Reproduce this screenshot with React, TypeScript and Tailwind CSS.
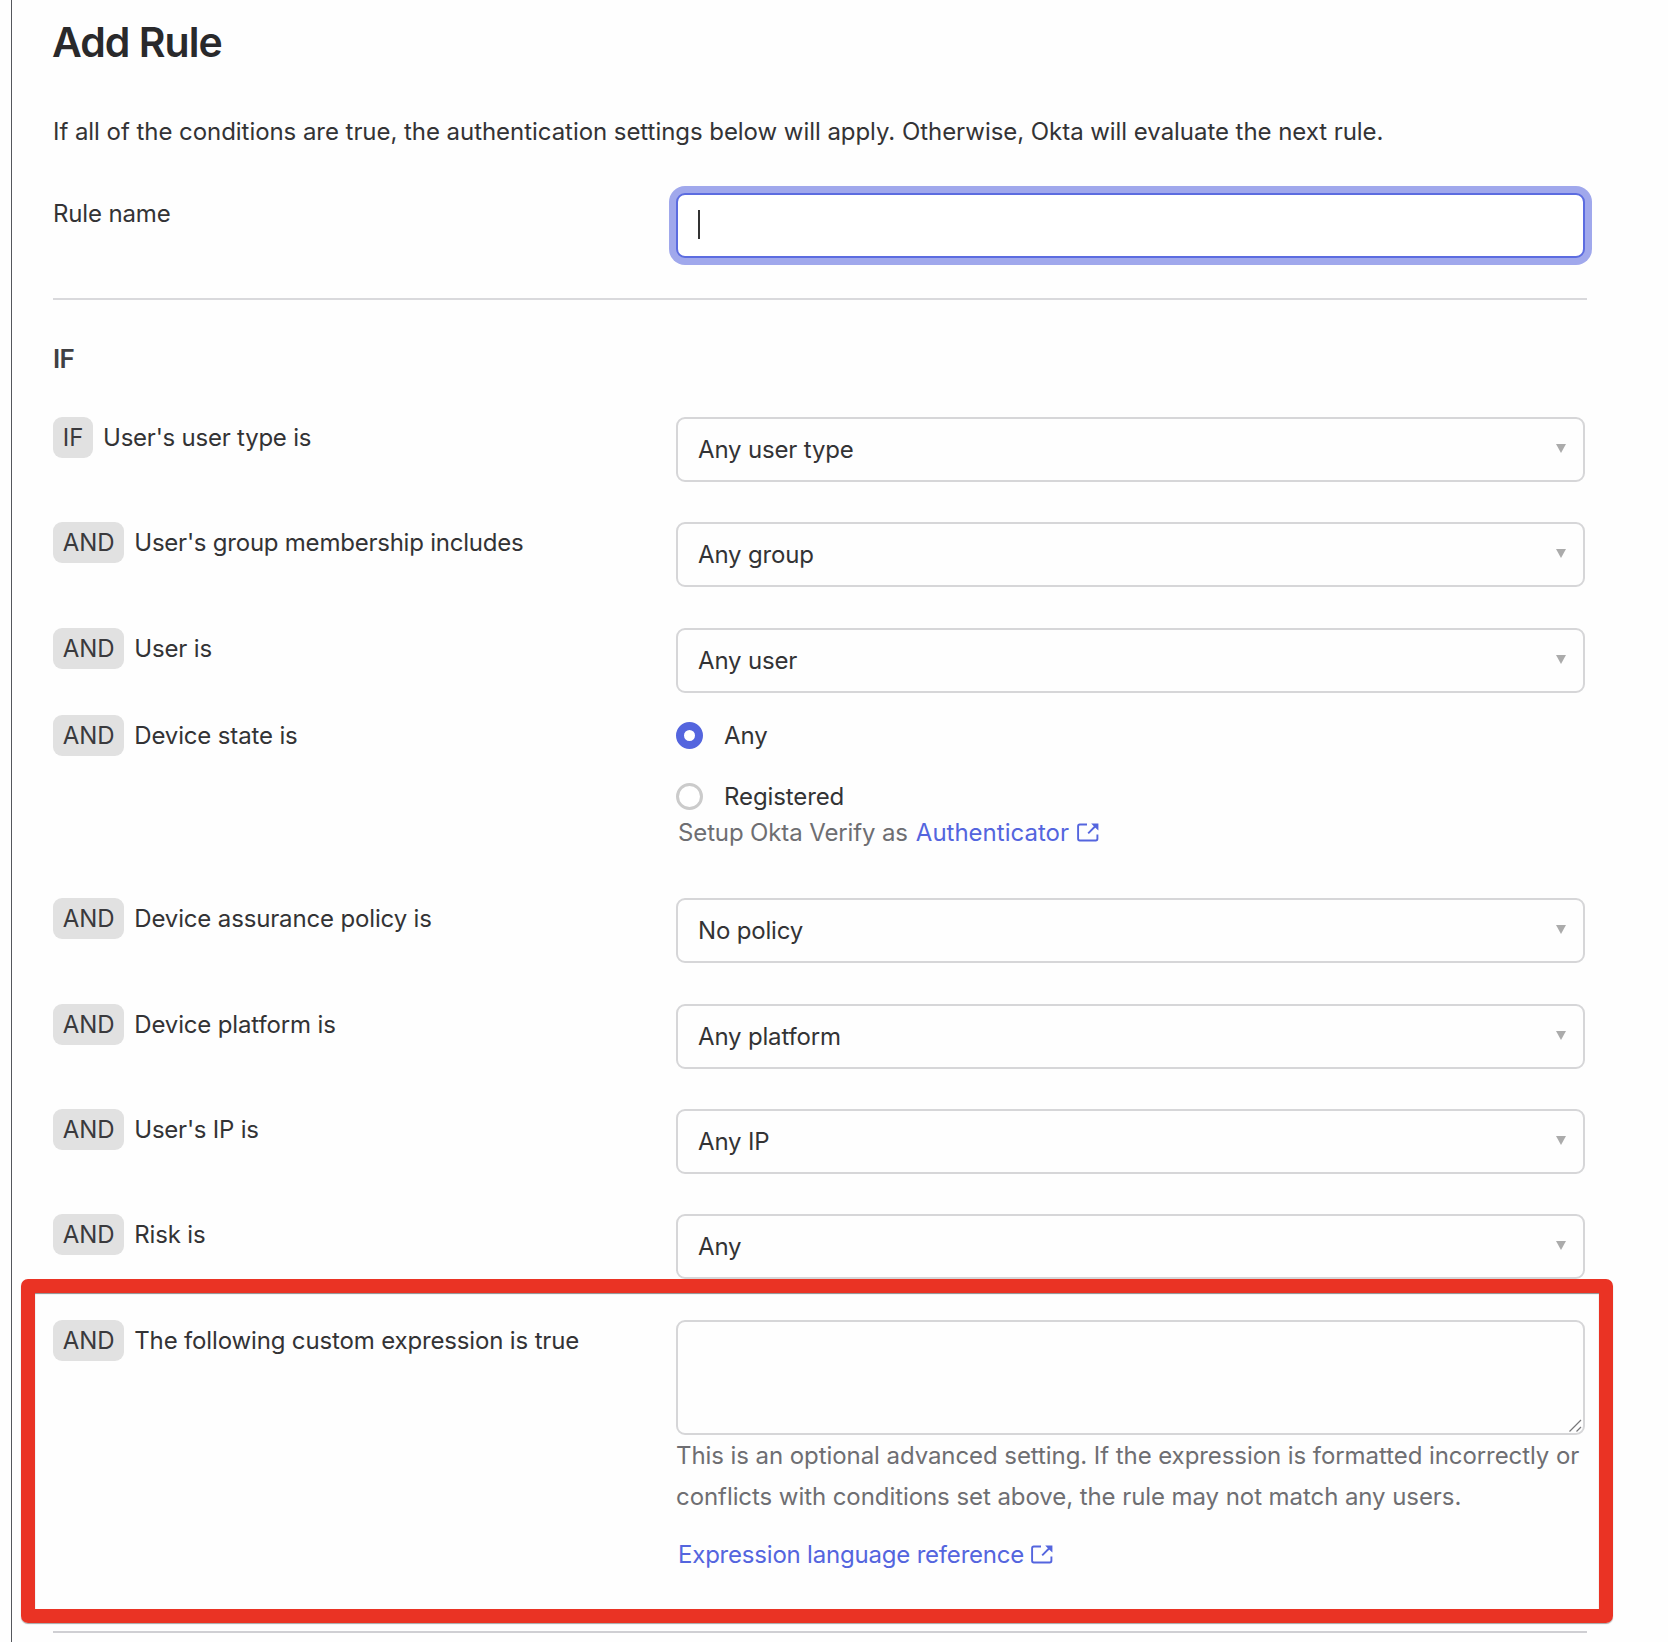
import { useState } from 'react';
import type { ReactNode } from 'react';

type Condition = {
  prefix: string;
  label: string;
  value: string;
};

const userConditions: Condition[] = [
  { prefix: 'IF', label: "User's user type is", value: 'Any user type' },
  { prefix: 'AND', label: "User's group membership includes", value: 'Any group' },
  { prefix: 'AND', label: 'User is', value: 'Any user' },
];

const deviceConditions: Condition[] = [
  { prefix: 'AND', label: 'Device assurance policy is', value: 'No policy' },
  { prefix: 'AND', label: 'Device platform is', value: 'Any platform' },
  { prefix: 'AND', label: "User's IP is", value: 'Any IP' },
  { prefix: 'AND', label: 'Risk is', value: 'Any' },
];

const ExternalLinkIcon = () => (
  <svg width="22" height="19" viewBox="0 0 22 19" fill="none" stroke="currentColor" strokeWidth="1.9">
    <path d="M10 1.5H2.8C1.8 1.5 1.1 2.2 1.1 3.2V15.8C1.1 16.8 1.8 17.5 2.8 17.5H18.7C19.7 17.5 20.4 16.8 20.4 15.8V11.5" />
    <path d="M11.2 10.3L18.5 3" />
    <path d="M14.2 0.6H21.4V7.6L18.9 5.2L16.6 2.9Z" fill="currentColor" stroke="none" />
  </svg>
);

const Row = ({ prefix, label, children }: { prefix?: string; label: string; children: ReactNode }) => (
  <div className="flex items-start">
    <div className="flex h-[41px] w-[623px] shrink-0 items-center">
      {prefix && (
        <span className="mr-[10px] flex h-[41px] items-center rounded-[9px] bg-[#e1e1e1] px-[9.8px] tracking-[-0.1px] text-[#3a3a3d]">{prefix}</span>
      )}
      <span className={label.includes("'") ? 'tracking-[-0.23px]' : 'tracking-[-0.15px]'}>{label}</span>
    </div>
    <div className="w-[909px]">{children}</div>
  </div>
);

const SelectBox = ({ value }: { value: string }) => (
  <div className="flex h-[65px] items-center justify-between rounded-[9px] border-2 border-[#d6d6d8] bg-[#fefefe] pr-[17px] pl-[20px]">
    <span className="tracking-[-0.17px]">{value}</span>
    <svg width="10" height="9" viewBox="0 0 10 9" className="mb-[2px]">
      <path d="M0 0H10L5 9Z" fill="#ababab" />
    </svg>
  </div>
);

const Radio = ({ label, checked, onSelect }: { label: string; checked: boolean; onSelect: () => void }) => (
  <button type="button" role="radio" aria-checked={checked} onClick={onSelect} className="flex h-[41px] items-center gap-[21px]">
    {checked ? (
      <span className="size-[27px] rounded-full border-8 border-[#5465de] bg-white" />
    ) : (
      <span className="size-[27px] rounded-full border-3 border-[#cbcbcb] bg-white" />
    )}
    <span className="tracking-[-0.1px]">{label}</span>
  </button>
);

export default function App() {
  const [deviceState, setDeviceState] = useState('Any');

  return (
    <div className="h-[1642px] w-[1668px] overflow-hidden bg-[#fefefe] pl-[11px] font-['Inter',sans-serif] text-[24px] leading-[41px] text-[#333335]">
      <div className="h-full border-l border-[#55575c] pl-[41px]">
        <h1 className="-ml-px pt-[20px] text-[41px] leading-[44px] font-semibold tracking-[-0.98px] text-[#29292b]">Add Rule</h1>
        <p className="mt-[47px] tracking-[-0.05px] whitespace-nowrap">
          If all of the conditions are true, the authentication settings below will apply. Otherwise, Okta will evaluate the next rule.
        </p>

        <div className="mt-[41px]">
          <Row label="Rule name">
            <div className="flex h-[65px] items-center rounded-[9px] border-2 border-[#5c6ce0] bg-white pl-[20px] ring-7 ring-[#a0a8ec]">
              <span className="mb-[3px] h-[29px] w-[2px] bg-[#333]" />
            </div>
          </Row>
        </div>

        <hr className="mt-[40px] w-[1534px] border-t-2 border-[#d9d9dc]" />
        <h2 className="mt-[38px] text-[26px] font-semibold tracking-[-0.7px] text-[#404043]">IF</h2>

        <div className="mt-[38px] flex flex-col gap-[40.4px]">
          {userConditions.map((c) => (
            <Row key={c.label} prefix={c.prefix} label={c.label}>
              <SelectBox value={c.value} />
            </Row>
          ))}
        </div>

        <div className="mt-[22px]">
          <Row prefix="AND" label="Device state is">
            <div role="radiogroup" className="flex h-[183.4px] flex-col">
              <Radio label="Any" checked={deviceState === 'Any'} onSelect={() => setDeviceState('Any')} />
              <div className="mt-[20px]">
                <Radio label="Registered" checked={deviceState === 'Registered'} onSelect={() => setDeviceState('Registered')} />
              </div>
              <div className="-mt-[5px] flex items-center pl-[2px] text-[#6e6e72]">
                <span className="tracking-[-0.13px]">Setup Okta Verify as</span>
                <a className="ml-[8px] flex items-center gap-[8px] text-[#5465de]">
                  Authenticator
                  <ExternalLinkIcon />
                </a>
              </div>
            </div>
          </Row>
        </div>

        <div className="flex flex-col gap-[40.4px]">
          {deviceConditions.map((c) => (
            <Row key={c.label} prefix={c.prefix} label={c.label}>
              <SelectBox value={c.value} />
            </Row>
          ))}
        </div>

        <div className="relative mt-[40.4px] h-[311px]">
          <Row prefix="AND" label="The following custom expression is true">
            <div className="flex h-[115px] items-end justify-end rounded-[9px] border-2 border-[#d6d6d8] bg-[#fefefe]">
              <svg width="14" height="14" viewBox="0 0 14 14" stroke="#77777a" strokeWidth="1.2">
                <path d="M0.5 12.5L12 1M7.5 12.5L12 8" />
              </svg>
            </div>
            <p className="tracking-[-0.07px] whitespace-nowrap text-[#6e6e72]">
              This is an optional advanced setting. If the expression is formatted incorrectly or
              <br />
              conflicts with conditions set above, the rule may not match any users.
            </p>
            <a className="mt-[17px] flex items-center gap-[7px] pl-[2px] tracking-[-0.2px] text-[#5465de]">
              Expression language reference
              <ExternalLinkIcon />
            </a>
          </Row>
          {/* highlight around the custom expression field */}
          <div className="pointer-events-none absolute -top-[41px] -left-[32px] h-[344px] w-[1592px] rounded-[7px] border-[14px] border-[#ea3324] shadow-[0_1px_1px_rgba(0,0,0,0.35),inset_0_1px_1px_rgba(0,0,0,0.45)]" />
        </div>
        <hr className="w-[1534px] border-t-2 border-[#cfcfd3]" />
      </div>
    </div>
  );
}
